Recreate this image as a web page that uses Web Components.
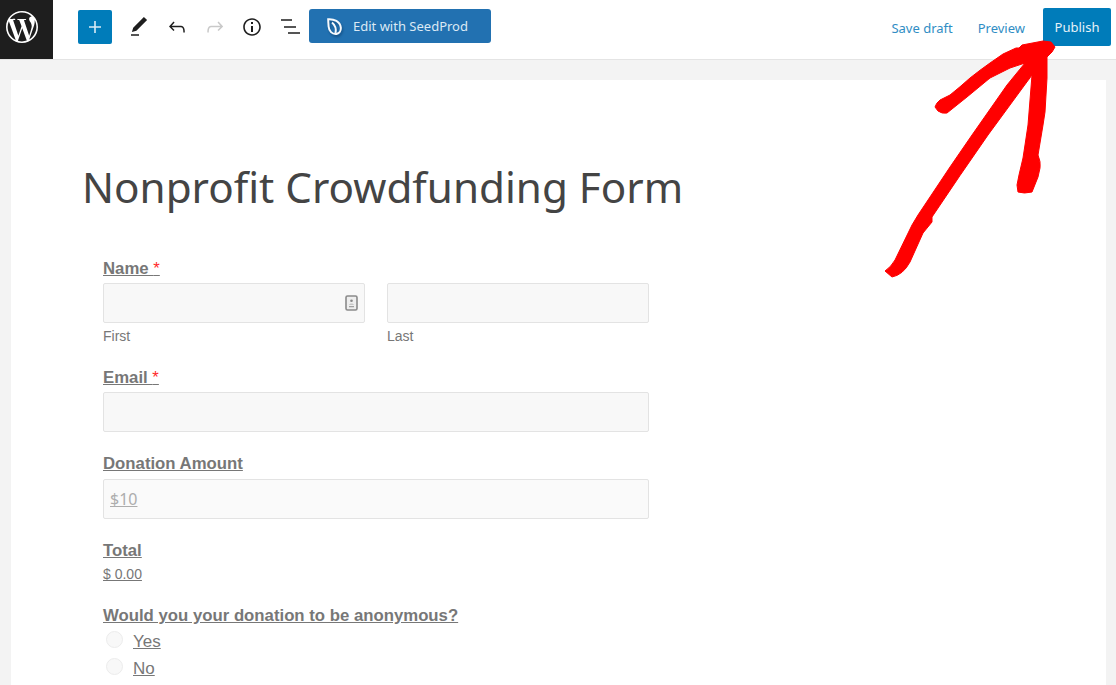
<!DOCTYPE html>
<html lang="en">
<head>
<meta charset="utf-8">
<title>Nonprofit Crowdfunding Form</title>
<style>
    html, body {
        margin: 0;
        height: 685px;
        overflow: hidden;
        background: #f3f3f3;
    }
</style>
</head>
<body>
<editor-page>
    <editor-topbar></editor-topbar>
    <form-card heading="Nonprofit Crowdfunding Form">
        <form-row label="Name" required>
            <form-input sublabel="First" contact></form-input>
            <form-input sublabel="Last"></form-input>
        </form-row>
        <form-row label="Email" required>
            <form-input></form-input>
        </form-row>
        <form-row label="Donation Amount" style="--label-gap: 6px">
            <form-input placeholder="$10" style="--box-bg: #fafafa"></form-input>
        </form-row>
        <form-total label="Total" amount="$ 0.00"></form-total>
        <form-radios label="Would you your donation to be anonymous?" options="Yes,No"></form-radios>
    </form-card>
    <red-arrow></red-arrow>
</editor-page>

<script>
class EditorPage extends HTMLElement {
    constructor() {
        super();
        this.attachShadow({ mode: 'open' });
    }

    connectedCallback() {
        this.shadowRoot.innerHTML = `
            <style>
                :host {
                    display: block;
                    position: relative;
                    height: 685px;
                    overflow: hidden;
                }
            </style>
            <slot></slot>
        `;
    }
}

class EditorTopbar extends HTMLElement {
    constructor() {
        super();
        this.attachShadow({ mode: 'open' });
    }

    connectedCallback() {
        this.shadowRoot.innerHTML = `
            <style>
                :host {
                    display: flex;
                    align-items: flex-start;
                    height: 59px;
                    background: #fff;
                    border-bottom: 1px solid #e4e4e4;
                    font-family: "Noto Sans", sans-serif;
                    font-size: 13px;
                }

                .logo {
                    width: 53px;
                    height: 59px;
                    padding-left: 6px;
                    box-sizing: border-box;
                    background: #1e1e1e;
                    flex: none;
                    display: flex;
                    align-items: center;
                }

                .logo svg {
                    fill: #fff;
                    margin-top: -5px;
                }

                .plus {
                    width: 34px;
                    height: 34px;
                    margin: 10px 0 0 25px;
                    background: #007cba;
                    border-radius: 2px;
                    display: flex;
                    align-items: center;
                    justify-content: center;
                }

                .tool {
                    width: 24px;
                    height: 24px;
                    margin-top: 15px;
                    fill: #1e1e1e;
                    flex: none;
                }

                .seedprod {
                    display: flex;
                    align-items: center;
                    width: 182px;
                    height: 34px;
                    margin: 9px 0 0 7px;
                    padding-left: 18px;
                    box-sizing: border-box;
                    background: #2271b1;
                    border-radius: 3px;
                    color: #dce9f4;
                    font-size: 13px;
                }

                .seedprod svg {
                    margin-right: 11px;
                    filter: drop-shadow(1px 2px 1px rgba(0, 40, 80, .45));
                }

                .end {
                    display: flex;
                    align-items: flex-start;
                    margin-left: auto;
                }

                .link {
                    color: #2f8dc4;
                    line-height: 18px;
                    margin-top: 19px;
                }

                .publish {
                    width: 68px;
                    height: 38px;
                    margin: 8px 5px 0 18px;
                    background: #007cba;
                    border-radius: 2px;
                    color: #e6f2f8;
                    line-height: 38px;
                    text-align: center;
                }
            </style>

            <div class="logo">
                <svg width="32" height="32" viewBox="0 0 24 24"><path d="M21.469 6.825c.84 1.537 1.318 3.3 1.318 5.175 0 3.979-2.156 7.456-5.363 9.325l3.295-9.527c.615-1.54.82-2.771.82-3.864 0-.405-.026-.78-.07-1.11m-7.981.105c.647-.03 1.232-.105 1.232-.105.582-.075.514-.93-.067-.899 0 0-1.755.135-2.88.135-1.064 0-2.85-.15-2.85-.15-.585-.03-.661.855-.075.885 0 0 .54.061 1.125.09l1.68 4.605-2.37 7.08L5.354 6.9c.649-.03 1.234-.1 1.234-.1.585-.075.516-.93-.065-.896 0 0-1.746.138-2.874.138-.2 0-.438-.008-.69-.015C4.911 3.15 8.235 1.215 12 1.215c2.809 0 5.365 1.072 7.286 2.833-.046-.003-.091-.009-.141-.009-1.06 0-1.812.923-1.812 1.914 0 .89.513 1.643 1.06 2.531.411.72.89 1.643.89 2.977 0 .915-.354 1.994-.821 3.479l-1.075 3.585-3.9-11.61.001.014zM12 22.784c-1.059 0-2.081-.153-3.048-.437l3.237-9.406 3.315 9.087c.024.053.05.101.078.149-1.12.393-2.325.609-3.582.609M1.211 12c0-1.564.336-3.05.935-4.39L7.29 21.709C3.694 19.96 1.212 16.271 1.211 12M12 0C5.385 0 0 5.385 0 12s5.385 12 12 12 12-5.385 12-12S18.615 0 12 0"/></svg>
            </div>

            <div class="plus">
                <svg width="24" height="24" viewBox="0 0 24 24" fill="#d9ecf6"><path d="M18 11.2h-5.2V6h-1.6v5.2H6v1.6h5.2V18h1.6v-5.2H18z"/></svg>
            </div>

            <svg class="tool" style="margin-left:15px" viewBox="0 0 24 24"><path d="M20.1 5.1L16.9 2 6.2 12.7l-1.3 4.4 4.5-1.3L20.1 5.1zM4 20.8h8v-1.5H4v1.5z"/></svg>
            <svg class="tool" style="margin-left:14px" viewBox="0 0 24 24"><path d="M18.3 11.7c-.6-.6-1.4-.9-2.3-.9H6.7l2.9-3.3-1.1-1-4.5 5L8.5 16l1-1-2.7-2.7H16c.5 0 .9.2 1.3.5 1 1 1 3.4 1 4.5v.3h1.5v-.2c0-1.5 0-4.3-1.5-5.7z"/></svg>
            <svg class="tool" style="margin-left:14px;fill:#c9c9c9" viewBox="0 0 24 24"><path d="M15.6 6.5l-1.1 1 2.9 3.3H8c-.9 0-1.7.3-2.3.9-1.4 1.5-1.4 4.2-1.4 5.6v.2h1.5v-.3c0-1.1 0-3.5 1-4.5.3-.3.7-.5 1.3-.5h9.2L14.5 15l1.1 1.1 4.6-4.6-4.6-5z"/></svg>
            <svg class="tool" style="margin-left:13px" viewBox="0 0 24 24"><path d="M12 3.2c-4.8 0-8.8 3.9-8.8 8.8 0 4.8 3.9 8.8 8.8 8.8 4.8 0 8.8-3.9 8.8-8.8 0-4.8-4-8.8-8.8-8.8zm0 16c-4 0-7.2-3.3-7.2-7.2C4.8 8 8 4.8 12 4.8s7.2 3.3 7.2 7.2c0 4-3.2 7.2-7.2 7.2zM11 17h2v-6h-2v6zm0-8h2V7h-2v2z"/></svg>
            <svg class="tool" style="margin-left:14px" viewBox="0 0 24 24"><path d="M3 4.3h11v1.5H3zM6 11.3h12v1.5H6zM10 17.3h12v1.5H10z"/></svg>

            <div class="seedprod">
                <svg width="15" height="17" viewBox="0 0 15 17" fill="none" stroke="#f6f9fc" stroke-width="2"><path d="M1.2 1.2C7 .8 13 3.5 13.8 9.5c.3 3-1.4 5.8-4.2 6.4C5 16.5 2 13 1.6 8.5 1.4 6 1.2 3.5 1.2 1.2z"/><path d="M8.5 15.5C9.5 11 8 7 5 4.5"/></svg>
                <span>Edit with SeedProd</span>
            </div>

            <div class="end">
                <span class="link">Save draft</span>
                <span class="link" style="margin-left:25px">Preview</span>
                <span class="publish">Publish</span>
            </div>
        `;
    }
}

class FormCard extends HTMLElement {
    constructor() {
        super();
        this.attachShadow({ mode: 'open' });
    }

    connectedCallback() {
        this.shadowRoot.innerHTML = `
            <style>
                :host {
                    display: block;
                    margin: 20px 10px 0 11px;
                    padding: 76px 71px 0;
                    height: 700px;
                    background: #fff;
                }

                h1 {
                    margin: 0;
                    font-family: "Noto Sans", sans-serif;
                    font-size: 42.2px;
                    font-weight: 400;
                    line-height: 62px;
                    color: #444;
                }

                .fields {
                    display: flex;
                    flex-direction: column;
                    width: 546px;
                    margin: 42px 0 0 21px;
                    font-family: "Liberation Sans", Arial, sans-serif;
                    color: #777;
                }
            </style>

            <h1>${this.getAttribute('heading')}</h1>
            <div class="fields"><slot></slot></div>
        `;
    }
}

const labelStyles = `
    .label {
        font-size: 16.75px;
        font-weight: 700;
        line-height: 18px;
        color: #777;
        text-decoration: underline;
    }

    .label i {
        font-style: normal;
        font-weight: 400;
        color: #ff2a2a;
    }
`;

class FormRow extends HTMLElement {
    constructor() {
        super();
        this.attachShadow({ mode: 'open' });
    }

    connectedCallback() {
        const star = this.hasAttribute('required') ? ' <i>*</i>' : '';

        this.shadowRoot.innerHTML = `
            <style>
                ${labelStyles}

                :host {
                    display: block;
                    margin-bottom: 23px;
                }

                .label {
                    margin-bottom: var(--label-gap, 5px);
                }

                .inputs {
                    display: flex;
                    gap: 22px;
                }
            </style>

            <div class="label">${this.getAttribute('label')}${star}</div>
            <div class="inputs"><slot></slot></div>
        `;
    }
}

class FormInput extends HTMLElement {
    constructor() {
        super();
        this.attachShadow({ mode: 'open' });
    }

    connectedCallback() {
        const placeholder = this.getAttribute('placeholder') || '';
        const sublabel = this.getAttribute('sublabel');
        const contact = this.hasAttribute('contact') ? `
            <svg class="contact" width="13" height="16" viewBox="0 0 13 16">
                <rect x="1" y="1" width="11" height="14" rx="1.5" fill="#eee" stroke="#8a8a8a" stroke-width="1.6"/>
                <circle cx="6.5" cy="5.8" r="1.3" fill="#888"/>
                <path d="M4 9.6c0-1.3 5-1.3 5 0zM4 11h5v1.2H4z" fill="#a0a0a0"/>
            </svg>
        ` : '';

        this.shadowRoot.innerHTML = `
            <style>
                :host {
                    display: block;
                    flex: 1;
                }

                .box {
                    position: relative;
                    height: 40px;
                    box-sizing: border-box;
                    padding-left: 6px;
                    border: 1px solid #e3e3e3;
                    border-radius: 2px;
                    background: var(--box-bg, #f8f8f8);
                    font-family: "Noto Sans", sans-serif;
                    font-size: 16px;
                    line-height: 38px;
                    color: #adadad;
                    text-decoration: underline;
                }

                .contact {
                    position: absolute;
                    right: 6px;
                    top: 11px;
                }

                .sub {
                    margin: 5px 0 2px;
                    font-size: 14px;
                    line-height: 16px;
                    color: #777;
                }
            </style>

            <div class="box">${placeholder}${contact}</div>
            ${sublabel ? `<div class="sub">${sublabel}</div>` : ''}
        `;
    }
}

class FormTotal extends HTMLElement {
    constructor() {
        super();
        this.attachShadow({ mode: 'open' });
    }

    connectedCallback() {
        this.shadowRoot.innerHTML = `
            <style>
                ${labelStyles}

                :host {
                    display: block;
                    margin-bottom: 25px;
                }

                .amount {
                    margin-top: 6px;
                    font-size: 14px;
                    line-height: 16px;
                    color: #777;
                    text-decoration: underline;
                }
            </style>

            <div class="label">${this.getAttribute('label')}</div>
            <div class="amount">${this.getAttribute('amount')}</div>
        `;
    }
}

class FormRadios extends HTMLElement {
    constructor() {
        super();
        this.attachShadow({ mode: 'open' });
    }

    connectedCallback() {
        const options = this.getAttribute('options').split(',').map((option) => `
            <div class="option"><span class="dot"></span><span>${option}</span></div>
        `).join('');

        this.shadowRoot.innerHTML = `
            <style>
                ${labelStyles}

                :host {
                    display: block;
                }

                .list {
                    display: flex;
                    flex-direction: column;
                    gap: 9px;
                    margin-top: 8px;
                }

                .option {
                    display: flex;
                    align-items: flex-start;
                    gap: 10px;
                    padding-left: 3px;
                    font-size: 17px;
                    line-height: 18px;
                    color: #777;
                    text-decoration: underline;
                }

                .dot {
                    width: 15px;
                    height: 15px;
                    margin-top: -2px;
                    border: 1px solid #ececec;
                    border-radius: 50%;
                    background: #f8f8f8;
                }
            </style>

            <div class="label">${this.getAttribute('label')}</div>
            <div class="list">${options}</div>
        `;
    }
}

class RedArrow extends HTMLElement {
    constructor() {
        super();
        this.attachShadow({ mode: 'open' });
    }

    connectedCallback() {
        this.shadowRoot.innerHTML = `
            <style>
                :host {
                    position: absolute;
                    left: 0;
                    top: 0;
                    pointer-events: none;
                }

                svg {
                    display: block;
                }
            </style>

            <svg width="1116" height="685" viewBox="0 0 1116 685">
                <path fill="#ff0000" stroke="#ff0000" stroke-width="1" stroke-linejoin="round" d="M935 107 Q936 103 940 100 L950 95 Q960 87 970 78 Q980 70 990 63 L1003 54 L1016 48 L1019 48 L1022 45 L1043 41 L1051 42 L1055 47 L1052 52 L1047 57 L1047 78 L1045 112 L1043 125 L1038 155 Q1041 162 1040 168 L1038 177 L1032 192 Q1024 194 1018 192 L1017 185 L1019 175 L1023 158 L1025 145 L1028 125 L1032 75 L999 120 L988 135 Q960 175 932 217 L932 222 L923 233 L910 262 Q903 275 892 277 L885 271 Q891 267 895 260 L912 225 L918 215 L950 167 L972 135 L1007 85 L1025 63 L1010 68 L990 78 L967 97 L947 113 Q942 114 938 111 Z"/>
            </svg>
        `;
    }
}

customElements.define('editor-page', EditorPage);
customElements.define('editor-topbar', EditorTopbar);
customElements.define('form-card', FormCard);
customElements.define('form-row', FormRow);
customElements.define('form-input', FormInput);
customElements.define('form-total', FormTotal);
customElements.define('form-radios', FormRadios);
customElements.define('red-arrow', RedArrow);
</script>
</body>
</html>
